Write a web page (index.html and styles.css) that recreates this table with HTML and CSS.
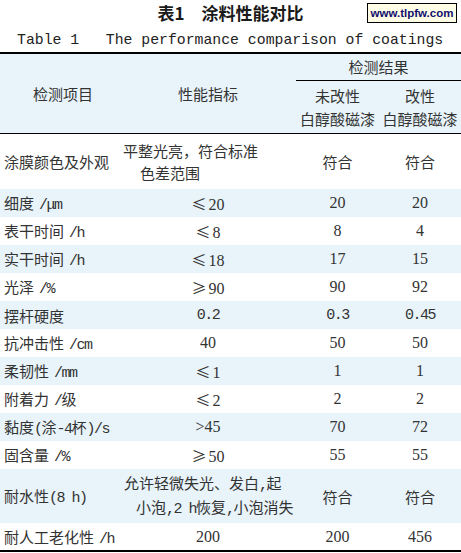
FILE: index.html
```html
<!DOCTYPE html>
<html lang="zh">
<head>
<meta charset="utf-8">
<title>涂料性能对比</title>
<link rel="stylesheet" href="styles.css">
</head>
<body>
<div class="page">
  <div class="mark">www.tlpfw.com</div>
  <h1 class="title">表1<span class="gap"></span>涂料性能对比</h1>
  <p class="subtitle">Table 1   The performance comparison of coatings</p>
  <div class="rule"></div>
  <table class="data">
    <colgroup><col class="c1"><col class="c2"><col class="c3"><col class="c4"></colgroup>
    <thead>
      <tr class="hr1">
        <th rowspan="2" class="lead">检测项目</th>
        <th rowspan="2">性能指标</th>
        <th colspan="2" class="group">检测结果</th>
      </tr>
      <tr class="hr2">
        <th class="sub">未改性<br>白醇酸磁漆</th>
        <th class="sub">改性<br>白醇酸磁漆</th>
      </tr>
    </thead>
    <tbody>
      <tr class="r2">
        <td class="name">涂膜颜色及外观</td>
        <td class="multi a"><span class="ln">平整光亮，符合标准</span><span class="ln i1">色差范围</span></td>
        <td>符合</td><td>符合</td>
      </tr>
      <tr class="r1 alt">
        <td class="name">细度<span class="u">/μm</span></td>
        <td class="n"><span class="sym">≤</span>20</td>
        <td class="n">20</td><td class="n">20</td>
      </tr>
      <tr class="r1">
        <td class="name">表干时间<span class="u">/h</span></td>
        <td class="n"><span class="sym">≤</span>8</td>
        <td class="n">8</td><td class="n">4</td>
      </tr>
      <tr class="r1 alt">
        <td class="name">实干时间<span class="u">/h</span></td>
        <td class="n"><span class="sym">≤</span>18</td>
        <td class="n">17</td><td class="n">15</td>
      </tr>
      <tr class="r1">
        <td class="name">光泽<span class="u">/%</span></td>
        <td class="n"><span class="sym">≥</span>90</td>
        <td class="n">90</td><td class="n">92</td>
      </tr>
      <tr class="r1 alt">
        <td class="name">摆杆硬度</td>
        <td class="m">0.2</td>
        <td class="m">0.3</td><td class="m">0.45</td>
      </tr>
      <tr class="r1">
        <td class="name">抗冲击性<span class="u">/cm</span></td>
        <td class="n">40</td>
        <td class="n">50</td><td class="n">50</td>
      </tr>
      <tr class="r1 alt">
        <td class="name">柔韧性<span class="u">/mm</span></td>
        <td class="n"><span class="sym">≤</span>1</td>
        <td class="n">1</td><td class="n">1</td>
      </tr>
      <tr class="r1">
        <td class="name">附着力<span class="u">/</span>级</td>
        <td class="n"><span class="sym">≤</span>2</td>
        <td class="n">2</td><td class="n">2</td>
      </tr>
      <tr class="r1 alt">
        <td class="name">黏度<span class="mono">(</span>涂<span class="mono">-4</span>杯<span class="mono">)/s</span></td>
        <td class="n">&gt;45</td>
        <td class="n">70</td><td class="n">72</td>
      </tr>
      <tr class="r1">
        <td class="name">固含量<span class="u">/%</span></td>
        <td class="n"><span class="sym">≥</span>50</td>
        <td class="n">55</td><td class="n">55</td>
      </tr>
      <tr class="r2b alt">
        <td class="name">耐水性<span class="mono">(8 h)</span></td>
        <td class="multi b"><span class="ln">允许轻微失光、发白<span class="mono">,</span>起</span><span class="ln i2">小泡<span class="mono">,2 h</span>恢复<span class="mono">,</span>小泡消失</span></td>
        <td>符合</td><td>符合</td>
      </tr>
      <tr class="rl">
        <td class="name">耐人工老化性<span class="u">/h</span></td>
        <td class="n">200</td>
        <td class="n">200</td><td class="n">456</td>
      </tr>
    </tbody>
  </table>
  <div class="rule"></div>
</div>
</body>
</html>
```

FILE: styles.css
```css
html, body {
  margin: 0;
  padding: 0;
  background: #fff;
}

.page {
  position: relative;
  width: 461px;
  font-family: "Noto Sans CJK SC", sans-serif;
  font-size: 15px;
  color: #333;
}

.mark {
  position: absolute;
  left: 367px;
  top: 3px;
  width: 88px;
  height: 18px;
  border: 1px solid #000;
  background: #fffde6;
  color: #10106e;
  font-family: "Liberation Sans", sans-serif;
  font-weight: bold;
  font-size: 11.5px;
  line-height: 18px;
  text-align: center;
}

.title {
  margin: 0;
  height: 26px;
  line-height: 26px;
  font-size: 17px;
  font-weight: bold;
  color: #1a1a1a;
  text-align: center;
}

.gap {
  display: inline-block;
  width: 17px;
}

.subtitle {
  margin: 0;
  height: 26px;
  line-height: 28px;
  padding-left: 17px;
  font-family: "Liberation Mono", monospace;
  font-size: 14.8px;
  color: #222;
  white-space: pre;
}

.rule {
  height: 2px;
  background: #000;
}

.data {
  width: 461px;
  table-layout: fixed;
  border-collapse: separate;
  border-spacing: 0;
}

.c1 { width: 120px; }
.c2 { width: 176px; }
.c3 { width: 83px; }
.c4 { width: 82px; }

.data th,
.data td {
  padding: 0;
  text-align: center;
  vertical-align: middle;
  font-weight: normal;
  white-space: nowrap;
}

.data thead {
  background: #e8f3fa;
}

.hr1 { height: 27px; }
.hr2 { height: 53px; }

.data th.lead {
  padding-left: 6px;
}

.data th.group {
  border-bottom: 1px solid #000;
  line-height: 26px;
}

.hr1 th[rowspan],
.data th.sub {
  border-bottom: 1px solid #000;
}

.data th.sub {
  line-height: 23px;
}

.r1 { height: 28px; }
.r2 { height: 55px; }
.r2b { height: 54px; }
.rl { height: 27px; }

.alt {
  background: #e8f3fa;
}

.data td.name {
  text-align: left;
  padding-left: 4px;
}

.u,
.mono,
.data td.m {
  font-family: "Liberation Mono", monospace;
  font-size: 15px;
  letter-spacing: -1.5px;
}

.u {
  padding-left: 5px;
}

.data td.n {
  font-family: "Liberation Serif", serif;
  font-size: 16px;
}

.sym {
  font-family: "Noto Sans CJK SC", sans-serif;
  font-size: 15px;
  margin-right: 2px;
}

.data td.multi {
  text-align: left;
}

.ln {
  display: block;
}

.multi.a .ln {
  line-height: 22px;
  padding-left: 3px;
}

.multi.b .ln {
  line-height: 21px;
  padding-left: 4px;
}

.multi.a .ln.i1 { padding-left: 20px; }
.multi.b .ln.i2 { padding-left: 16px; }
```
